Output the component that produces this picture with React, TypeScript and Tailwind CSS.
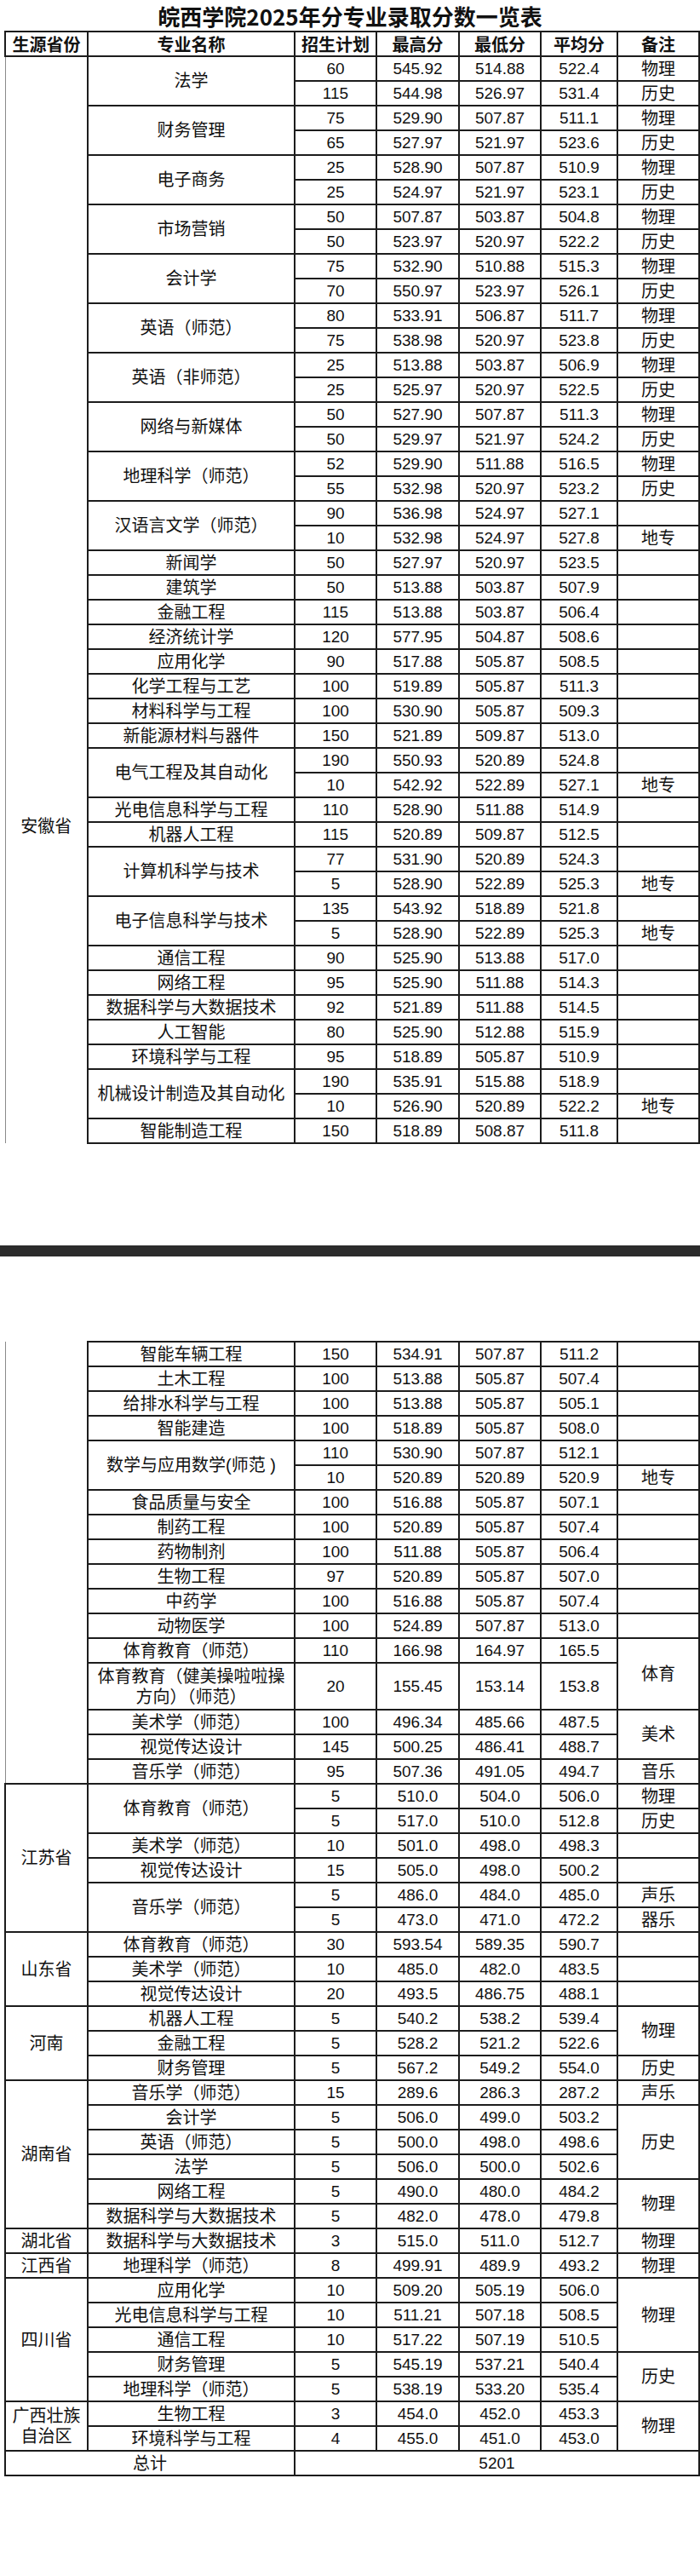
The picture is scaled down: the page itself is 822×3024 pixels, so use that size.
import React from 'react';

// [专业, 专业行数, 招生计划, 最高分, 最低分, 平均分, 备注, 备注行数]
type Row = [string | null, number, string, string, string, string, string | null, number];

type Prov = {
  text?: React.ReactNode;
  span: number;
  anhui?: 'top' | 'bottom';
};

const line = 'border-2 border-[#1c1c1c]';
const cell = `${line} p-0 text-center align-middle whitespace-nowrap`;

const page1: Row[] = [
  ['法学', 2, '60', '545.92', '514.88', '522.4', '物理', 1],
  [null, 0, '115', '544.98', '526.97', '531.4', '历史', 1],
  ['财务管理', 2, '75', '529.90', '507.87', '511.1', '物理', 1],
  [null, 0, '65', '527.97', '521.97', '523.6', '历史', 1],
  ['电子商务', 2, '25', '528.90', '507.87', '510.9', '物理', 1],
  [null, 0, '25', '524.97', '521.97', '523.1', '历史', 1],
  ['市场营销', 2, '50', '507.87', '503.87', '504.8', '物理', 1],
  [null, 0, '50', '523.97', '520.97', '522.2', '历史', 1],
  ['会计学', 2, '75', '532.90', '510.88', '515.3', '物理', 1],
  [null, 0, '70', '550.97', '523.97', '526.1', '历史', 1],
  ['英语（师范）', 2, '80', '533.91', '506.87', '511.7', '物理', 1],
  [null, 0, '75', '538.98', '520.97', '523.8', '历史', 1],
  ['英语（非师范）', 2, '25', '513.88', '503.87', '506.9', '物理', 1],
  [null, 0, '25', '525.97', '520.97', '522.5', '历史', 1],
  ['网络与新媒体', 2, '50', '527.90', '507.87', '511.3', '物理', 1],
  [null, 0, '50', '529.97', '521.97', '524.2', '历史', 1],
  ['地理科学（师范）', 2, '52', '529.90', '511.88', '516.5', '物理', 1],
  [null, 0, '55', '532.98', '520.97', '523.2', '历史', 1],
  ['汉语言文学（师范）', 2, '90', '536.98', '524.97', '527.1', '', 1],
  [null, 0, '10', '532.98', '524.97', '527.8', '地专', 1],
  ['新闻学', 1, '50', '527.97', '520.97', '523.5', '', 1],
  ['建筑学', 1, '50', '513.88', '503.87', '507.9', '', 1],
  ['金融工程', 1, '115', '513.88', '503.87', '506.4', '', 1],
  ['经济统计学', 1, '120', '577.95', '504.87', '508.6', '', 1],
  ['应用化学', 1, '90', '517.88', '505.87', '508.5', '', 1],
  ['化学工程与工艺', 1, '100', '519.89', '505.87', '511.3', '', 1],
  ['材料科学与工程', 1, '100', '530.90', '505.87', '509.3', '', 1],
  ['新能源材料与器件', 1, '150', '521.89', '509.87', '513.0', '', 1],
  ['电气工程及其自动化', 2, '190', '550.93', '520.89', '524.8', '', 1],
  [null, 0, '10', '542.92', '522.89', '527.1', '地专', 1],
  ['光电信息科学与工程', 1, '110', '528.90', '511.88', '514.9', '', 1],
  ['机器人工程', 1, '115', '520.89', '509.87', '512.5', '', 1],
  ['计算机科学与技术', 2, '77', '531.90', '520.89', '524.3', '', 1],
  [null, 0, '5', '528.90', '522.89', '525.3', '地专', 1],
  ['电子信息科学与技术', 2, '135', '543.92', '518.89', '521.8', '', 1],
  [null, 0, '5', '528.90', '522.89', '525.3', '地专', 1],
  ['通信工程', 1, '90', '525.90', '513.88', '517.0', '', 1],
  ['网络工程', 1, '95', '525.90', '511.88', '514.3', '', 1],
  ['数据科学与大数据技术', 1, '92', '521.89', '511.88', '514.5', '', 1],
  ['人工智能', 1, '80', '525.90', '512.88', '515.9', '', 1],
  ['环境科学与工程', 1, '95', '518.89', '505.87', '510.9', '', 1],
  ['机械设计制造及其自动化', 2, '190', '535.91', '515.88', '518.9', '', 1],
  [null, 0, '10', '526.90', '520.89', '522.2', '地专', 1],
  ['智能制造工程', 1, '150', '518.89', '508.87', '511.8', '', 1],
];

const page2: Row[] = [
  ['智能车辆工程', 1, '150', '534.91', '507.87', '511.2', '', 1],
  ['土木工程', 1, '100', '513.88', '505.87', '507.4', '', 1],
  ['给排水科学与工程', 1, '100', '513.88', '505.87', '505.1', '', 1],
  ['智能建造', 1, '100', '518.89', '505.87', '508.0', '', 1],
  ['数学与应用数学(师范 )', 2, '110', '530.90', '507.87', '512.1', '', 1],
  [null, 0, '10', '520.89', '520.89', '520.9', '地专', 1],
  ['食品质量与安全', 1, '100', '516.88', '505.87', '507.1', '', 1],
  ['制药工程', 1, '100', '520.89', '505.87', '507.4', '', 1],
  ['药物制剂', 1, '100', '511.88', '505.87', '506.4', '', 1],
  ['生物工程', 1, '97', '520.89', '505.87', '507.0', '', 1],
  ['中药学', 1, '100', '516.88', '505.87', '507.4', '', 1],
  ['动物医学', 1, '100', '524.89', '507.87', '513.0', '', 1],
  ['体育教育（师范）', 1, '110', '166.98', '164.97', '165.5', '体育', 2],
  ['体育教育（健美操啦啦操\n方向）（师范）', 1, '20', '155.45', '153.14', '153.8', null, 0],
  ['美术学（师范）', 1, '100', '496.34', '485.66', '487.5', '美术', 2],
  ['视觉传达设计', 1, '145', '500.25', '486.41', '488.7', null, 0],
  ['音乐学（师范）', 1, '95', '507.36', '491.05', '494.7', '音乐', 1],
  // 江苏省
  ['体育教育（师范）', 2, '5', '510.0', '504.0', '506.0', '物理', 1],
  [null, 0, '5', '517.0', '510.0', '512.8', '历史', 1],
  ['美术学（师范）', 1, '10', '501.0', '498.0', '498.3', '', 1],
  ['视觉传达设计', 1, '15', '505.0', '498.0', '500.2', '', 1],
  ['音乐学（师范）', 2, '5', '486.0', '484.0', '485.0', '声乐', 1],
  [null, 0, '5', '473.0', '471.0', '472.2', '器乐', 1],
  // 山东省
  ['体育教育（师范）', 1, '30', '593.54', '589.35', '590.7', '', 1],
  ['美术学（师范）', 1, '10', '485.0', '482.0', '483.5', '', 1],
  ['视觉传达设计', 1, '20', '493.5', '486.75', '488.1', '', 1],
  // 河南
  ['机器人工程', 1, '5', '540.2', '538.2', '539.4', '物理', 2],
  ['金融工程', 1, '5', '528.2', '521.2', '522.6', null, 0],
  ['财务管理', 1, '5', '567.2', '549.2', '554.0', '历史', 1],
  // 湖南省
  ['音乐学（师范）', 1, '15', '289.6', '286.3', '287.2', '声乐', 1],
  ['会计学', 1, '5', '506.0', '499.0', '503.2', '历史', 3],
  ['英语（师范）', 1, '5', '500.0', '498.0', '498.6', null, 0],
  ['法学', 1, '5', '506.0', '500.0', '502.6', null, 0],
  ['网络工程', 1, '5', '490.0', '480.0', '484.2', '物理', 2],
  ['数据科学与大数据技术', 1, '5', '482.0', '478.0', '479.8', null, 0],
  // 湖北省
  ['数据科学与大数据技术', 1, '3', '515.0', '511.0', '512.7', '物理', 1],
  // 江西省
  ['地理科学（师范）', 1, '8', '499.91', '489.9', '493.2', '物理', 1],
  // 四川省
  ['应用化学', 1, '10', '509.20', '505.19', '506.0', '物理', 3],
  ['光电信息科学与工程', 1, '10', '511.21', '507.18', '508.5', null, 0],
  ['通信工程', 1, '10', '517.22', '507.19', '510.5', null, 0],
  ['财务管理', 1, '5', '545.19', '537.21', '540.4', '历史', 2],
  ['地理科学（师范）', 1, '5', '538.19', '533.20', '535.4', null, 0],
  // 广西壮族自治区
  ['生物工程', 1, '3', '454.0', '452.0', '453.3', '物理', 2],
  ['环境科学与工程', 1, '4', '455.0', '451.0', '453.0', null, 0],
];

const provs1: Record<number, Prov> = {
  0: { text: '安徽省', span: 44, anhui: 'top' },
};

const provs2: Record<number, Prov> = {
  0: { span: 17, anhui: 'bottom' },
  17: { text: '江苏省', span: 6 },
  23: { text: '山东省', span: 3 },
  26: { text: '河南', span: 3 },
  29: { text: '湖南省', span: 6 },
  35: { text: '湖北省', span: 1 },
  36: { text: '江西省', span: 1 },
  37: { text: '四川省', span: 5 },
  42: { text: <>广西壮族<br />自治区</>, span: 2 },
};

const Cols = () => (
  <colgroup>
    <col className="w-[97px]" />
    <col className="w-[243px]" />
    <col className="w-[96px]" />
    <col className="w-[97px]" />
    <col className="w-[96px]" />
    <col className="w-[90px]" />
    <col className="w-[96px]" />
  </colgroup>
);

const Body: React.FC<{ rows: Row[]; provs: Record<number, Prov> }> = ({ rows, provs }) => (
  <>
    {rows.map((r, i) => {
      const p = provs[i];
      const tall = r[0] !== null && r[0].includes('\n');
      const h = tall ? 'h-[55px]' : 'h-[29px]';
      let provCls = `${cell} leading-[24px]`;
      if (p?.anhui === 'top') provCls = `${cell} !border-l !border-l-[#8a8a8a] !border-b-0 align-top pt-[891px] leading-[24px]`;
      if (p?.anhui === 'bottom') provCls = `${cell} !border-l !border-l-[#8a8a8a] !border-t-0`;
      return (
        <tr key={i}>
          {p && (
            <td rowSpan={p.span} className={provCls}>
              {p.text}
            </td>
          )}
          {r[0] !== null && (
            <td rowSpan={r[1]} className={`${cell} leading-[24px]`}>
              {r[0].split('\n').map((t, k) => (
                <React.Fragment key={k}>
                  {k > 0 && <br />}
                  {t}
                </React.Fragment>
              ))}
            </td>
          )}
          {[r[2], r[3], r[4], r[5]].map((n, k) => (
            <td key={k} className={`${cell} ${h} text-[19px] leading-[20px]`}>
              {n}
            </td>
          ))}
          {r[6] !== null && (
            <td rowSpan={r[7]} className={cell}>
              {r[6]}
            </td>
          )}
        </tr>
      );
    })}
  </>
);

export default function App() {
  return (
    <div className="w-[822px] h-[3024px] bg-white text-[#111] text-[20px] leading-[24px] font-['Liberation_Sans','Noto_Sans_CJK_SC',sans-serif]">
      <div className="h-[36px] pt-[3px] text-center text-[26px] leading-[32px] font-bold font-['Noto_Sans_CJK_SC',sans-serif]">
        皖西学院2025年分专业录取分数一览表
      </div>

      <table className="ml-[5px] w-[815px] table-fixed border-collapse">
        <Cols />
        <tbody>
          <tr>
            {['生源省份', '专业名称', '招生计划', '最高分', '最低分', '平均分', '备注'].map((t) => (
              <td key={t} className={`${cell} h-[29px] font-bold font-['Noto_Sans_CJK_SC',sans-serif]`}>
                {t}
              </td>
            ))}
          </tr>
          <Body rows={page1} provs={provs1} />
        </tbody>
      </table>

      <div className="h-[119px]" />
      <div className="h-[13px] bg-[#2b2b2b]" />
      <div className="h-[99px]" />

      <table className="ml-[5px] w-[815px] table-fixed border-collapse">
        <Cols />
        <tbody>
          <Body rows={page2} provs={provs2} />
          <tr>
            <td colSpan={2} className={`${cell} h-[29px]`}>
              总计
            </td>
            <td colSpan={5} className={`${cell} h-[29px] text-[19px]`}>
              5201
            </td>
          </tr>
        </tbody>
      </table>
    </div>
  );
}
